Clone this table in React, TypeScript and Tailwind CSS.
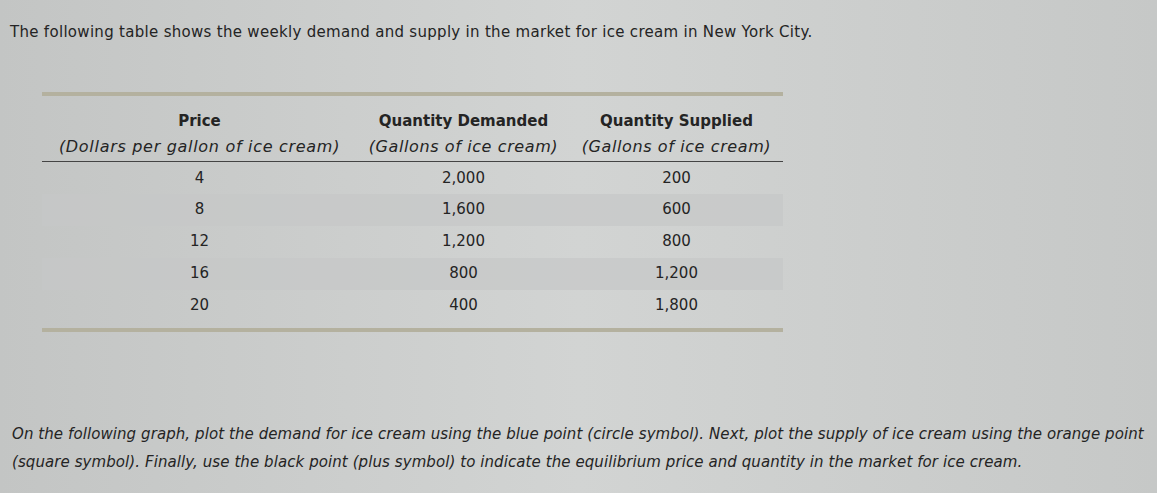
const rows = [
  { price: "4", demanded: "2,000", supplied: "200" },
  { price: "8", demanded: "1,600", supplied: "600" },
  { price: "12", demanded: "1,200", supplied: "800" },
  { price: "16", demanded: "800", supplied: "1,200" },
  { price: "20", demanded: "400", supplied: "1,800" },
];

export default function App() {
  return (
    <div className="w-[1157px] h-[493px] overflow-hidden bg-gradient-to-r from-[#c3c5c4] via-[#d2d4d3] to-[#c6c8c7] text-[#242424] font-['DejaVu_Sans',Verdana,sans-serif]">
      <p className="pl-[10px] pt-[22px] text-[15px] leading-[20px] tracking-[0.3px] whitespace-nowrap">
        The following table shows the weekly demand and supply in the market for ice cream in New York City.
      </p>

      <div className="ml-[42px] mt-[50px] w-[741px]">
        <div className="h-[4px] bg-[#b4b19f]" />
        <table className="w-full border-collapse text-center">
          <thead>
            <tr className="border-b border-[#444]">
              <th className="w-[315px] pt-[12px] pb-[1px] font-normal">
                <div className="text-[15px] font-bold leading-[26px]">Price</div>
                <div className="text-[16px] italic leading-[26px] tracking-[0.7px] whitespace-nowrap">(Dollars per gallon of ice cream)</div>
              </th>
              <th className="w-[213px] pt-[12px] pb-[1px] font-normal">
                <div className="text-[15px] font-bold leading-[26px]">Quantity Demanded</div>
                <div className="text-[16px] italic leading-[26px] tracking-[0.6px] whitespace-nowrap">(Gallons of ice cream)</div>
              </th>
              <th className="w-[213px] pt-[12px] pb-[1px] font-normal">
                <div className="text-[15px] font-bold leading-[26px]">Quantity Supplied</div>
                <div className="text-[16px] italic leading-[26px] tracking-[0.6px] whitespace-nowrap">(Gallons of ice cream)</div>
              </th>
            </tr>
          </thead>
          <tbody className="text-[15px]">
            {rows.map((r, i) => (
              <tr key={r.price} className={i % 2 === 1 ? "bg-[#c6c8c7]/70" : ""}>
                <td className="h-[32px]">{r.price}</td>
                <td className="h-[32px]">{r.demanded}</td>
                <td className="h-[32px]">{r.supplied}</td>
              </tr>
            ))}
          </tbody>
        </table>
        <div className="mt-[6px] h-[4px] bg-[#b4b19f]" />
      </div>

      <div className="mt-[88px] pl-[12px] text-[15px] leading-[28px] italic tracking-[0.08px] whitespace-nowrap">
        <p>
          On the following graph, plot the demand for ice cream using the blue point (circle symbol). Next, plot the supply of ice cream using the orange point
        </p>
        <p>
          (square symbol). Finally, use the black point (plus symbol) to indicate the equilibrium price and quantity in the market for ice cream.
        </p>
      </div>
    </div>
  );
}
